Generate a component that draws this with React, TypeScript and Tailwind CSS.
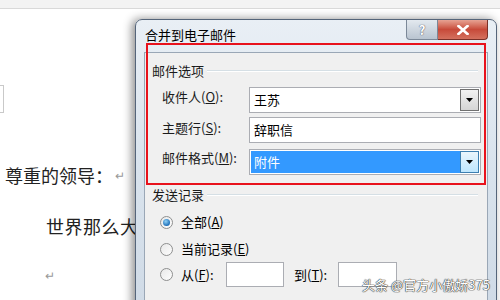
import React from "react";

const font = "font-['Noto_Sans_CJK_SC','Noto_Sans',sans-serif]";

function Arrow() {
  return (
    <svg width="7" height="4" viewBox="0 0 7 4">
      <path d="M0 0h7L3.5 4z" fill="#000" />
    </svg>
  );
}

function Combo({ text, active }: { text: string; active?: boolean }) {
  return (
    <div className="flex w-[232px] h-[26px] border border-[#abadb3] bg-white p-[1px]">
      <div
        className={
          active
            ? "flex-1 flex items-center pl-[3px] bg-[#3399ff] text-white"
            : "flex-1 flex items-center pl-[3px] text-black"
        }
      >
        {text}
      </div>
      <div
        className={
          active
            ? "w-[19px] flex items-center justify-center border border-[#3c7fb1] bg-gradient-to-b from-[#eaf6fd] to-[#bee6fd]"
            : "w-[19px] flex items-center justify-center border border-[#707070] bg-gradient-to-b from-[#f2f2f2] to-[#d5d5d5]"
        }
      >
        <Arrow />
      </div>
    </div>
  );
}

function Radio({ checked }: { checked?: boolean }) {
  return (
    <div className="w-[13px] h-[13px] rounded-full border border-[#8e8f8f] bg-gradient-to-br from-[#e8e8e8] to-[#fdfdfd] flex items-center justify-center">
      {checked && (
        <div className="w-[7px] h-[7px] rounded-full bg-[radial-gradient(circle_at_40%_35%,#8fd1f7,#1e6fb8_70%)]" />
      )}
    </div>
  );
}

function GroupHead({ label, mt }: { label: string; mt: string }) {
  return (
    <div className={"flex items-center h-[16px] pl-[7px] pr-[9px] " + mt}>
      <span className="text-[#1b1b1b]">{label}</span>
      <div className="flex-1 h-[2px] ml-[3px] border-t border-[#d5dfe5] border-b border-b-white" />
    </div>
  );
}

export default function App() {
  return (
    <div className={"relative w-[500px] h-[300px] overflow-hidden bg-white " + font}>
      {/* document */}
      <div className="h-[9px] bg-[#f3f3f3] border-b border-[#d9d9d9]" />
      <div className="mt-[76px] h-[28px] w-[4px] border border-l-0 border-[#c9c9c9]" />
      <div className="mt-[50px] pl-[5px] h-[24px] flex items-center text-[18px] text-[#222]">
        尊重的领导：<span className="text-[12px] text-[#999] ml-[2px]">↵</span>
      </div>
      <div className="mt-[27px] pl-[46px] h-[24px] flex items-center text-[18px] text-[#222] tracking-[0.5px]">
        世界那么大
      </div>
      <div className="mt-[25px] pl-[45px] h-[24px] flex items-center text-[12px] text-[#999]">↵</div>

      {/* dialog */}
      <div className="absolute left-[135px] top-[19px] w-[362px] h-[300px] rounded-t-[7px] border border-[#55657a] bg-gradient-to-b from-[#e9eff5] via-[#d9e3ed] to-[#cfdae6] shadow-[-3px_0_10px_rgba(0,0,0,0.45)] flex flex-col text-[13px]">
        <div className="h-[32px] flex items-start">
          <div className="pl-[9px] pt-[7px] leading-[16px] text-black">合并到电子邮件</div>
          <div className="ml-auto mr-[8px] flex">
            <div className="w-[32px] h-[20px] rounded-bl-[4px] border border-t-0 border-[#7b8898] bg-gradient-to-b from-[#e3e9ef] to-[#b9c4d0] flex items-center justify-center text-[13px] font-bold text-white [text-shadow:0_0_1px_#556,0_0_1px_#556]">
              ?
            </div>
            <div className="w-[50px] h-[20px] rounded-br-[4px] border border-t-0 border-l-0 border-[#7a3028] bg-gradient-to-b from-[#e6a293] via-[#c74a3a] to-[#d4705e] flex items-center justify-center">
              <svg width="12" height="10" viewBox="0 0 12 10">
                <path d="M1.5 1l9 8M10.5 1l-9 8" stroke="#fff" strokeWidth="2.6" strokeLinecap="square" />
              </svg>
            </div>
          </div>
        </div>
        <div className="mx-[8px] flex-1 border border-[#9aa7b6] bg-[#f0f0f0] flex flex-col leading-[16px]">
          <GroupHead label="邮件选项" mt="mt-[10px]" />
          <div className="mt-[8px] flex items-start">
            <div className="w-[104px] pl-[17px] pt-[2px] text-[#1b1b1b]">
              收件人(<span className="underline">O</span>):
            </div>
            <Combo text="王苏" />
          </div>
          <div className="mt-[4px] flex items-start">
            <div className="w-[104px] pl-[17px] pt-[3px] text-[#1b1b1b]">
              主题行(<span className="underline">S</span>):
            </div>
            <div className="w-[232px] h-[26px] border border-[#abadb3] bg-white pl-[4px] flex items-center">辞职信</div>
          </div>
          <div className="mt-[6px] flex items-start">
            <div className="w-[104px] pl-[17px] pt-[1px] text-[#1b1b1b]">
              邮件格式(<span className="underline">M</span>):
            </div>
            <Combo text="附件" active />
          </div>
          <GroupHead label="发送记录" mt="mt-[12px]" />
          <div className="mt-[11px] h-[16px] pl-[15px] flex items-center gap-[8px]">
            <Radio checked />
            <span>
              全部(<span className="underline">A</span>)
            </span>
          </div>
          <div className="mt-[11px] h-[16px] pl-[15px] flex items-center gap-[8px]">
            <Radio />
            <span>
              当前记录(<span className="underline">E</span>)
            </span>
          </div>
          <div className="mt-[5px] h-[25px] pl-[15px] flex items-center">
            <Radio />
            <span className="ml-[8px] w-[45px]">
              从(<span className="underline">F</span>):
            </span>
            <div className="w-[58px] h-[25px] border border-[#abadb3] bg-white" />
            <span className="ml-[10px] w-[44px]">
              到(<span className="underline">T</span>):
            </span>
            <div className="w-[59px] h-[25px] border border-[#abadb3] bg-white" />
          </div>
        </div>
      </div>

      {/* red annotation */}
      <div className="absolute left-[146px] top-[43px] w-[340px] h-[142px] border-2 border-[#e8121c]" />

      {/* watermark */}
      <div className="absolute left-[362px] top-[276px] text-[13px] leading-[18px] text-white [text-shadow:0_0_1px_#333,0_0_1px_#333,0_0_1px_#333]">
        头条 @官方小傲娇375
      </div>
    </div>
  );
}
